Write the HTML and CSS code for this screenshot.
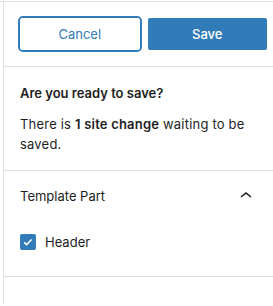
FILE: index.html
```html
<!DOCTYPE html>
<html>
<head>
<meta charset="utf-8">
<link rel="stylesheet" href="styles.css">
</head>
<body>
<div class="frame">
  <div class="panel">
    <div class="actions">
      <button class="btn btn-secondary">Cancel</button>
      <button class="btn btn-primary">Save</button>
    </div>
    <div class="section intro">
      <h2 class="title">Are you ready to save?</h2>
      <p class="desc">There is <strong>1 site change</strong> waiting to be saved.</p>
    </div>
    <div class="section group">
      <div class="group-head">
        <span class="group-title">Template Part</span>
        <svg class="chev" width="24" height="24" viewBox="0 0 24 24"><path d="M6.5 12.4L12 8l5.5 4.4-.9 1.2L12 10l-4.6 3.6-1-1.2z" fill="#1e1e1e"/></svg>
      </div>
      <label class="check-row">
        <span class="checkbox"><svg width="16" height="16" viewBox="0 0 16 16"><path d="M4.2 8.3l2.4 2.3 5-5.1" fill="none" stroke="#fff" stroke-width="1.6"/></svg></span>
        <span class="check-label">Header</span>
      </label>
    </div>
    <div class="rest"></div>
  </div>
</div>
</body>
</html>
```
FILE: styles.css
```css
html, body {
  margin: 0;
  padding: 0;
  background: #fff;
}
body {
  font-family: Inter, "Noto Sans", sans-serif;
  font-size: 13px;
  color: #1e1e1e;
  overflow: hidden;
  width: 273px;
  height: 306px;
}
.frame {
  margin-top: 1px;
  border-top: 1px solid #e0e0e0;
  height: 304px;
}
.panel {
  margin-left: 3px;
  width: 280px;
  border-left: 1px solid #e0e0e0;
  height: 302px;
  box-sizing: border-box;
}
.actions {
  display: flex;
  gap: 8px;
  padding: 16px;
  border-bottom: 1px solid #e0e0e0;
}
.btn {
  flex: 1;
  height: 32px;
  border-radius: 2px;
  font-family: inherit;
  font-size: 13px;
  border: 0;
  padding: 0;
  cursor: pointer;
}
.btn-secondary {
  background: #fff;
  color: #317bb8;
  box-shadow: inset 0 0 0 1px #fff, 0 0 0 2px #317bb8;
  border-radius: 3px;
}
.btn-primary {
  background: #317bb8;
  color: #fff;
  font-weight: 500;
}
.section {
  padding: 16px;
  border-bottom: 1px solid #e0e0e0;
}
.title {
  margin: 0 0 11px;
  font-size: 13px;
  line-height: 20px;
  font-weight: 600;
}
.desc {
  margin: 0;
  line-height: 20px;
  letter-spacing: 0.2px;
}
.desc strong {
  font-weight: 600;
}
.group {
  padding: 13px 16px 26px;
}
.group-head {
  display: flex;
  align-items: center;
  justify-content: space-between;
  height: 24px;
  padding-right: 9px;
}
.group-title {
  line-height: 20px;
}
.check-row {
  display: flex;
  align-items: center;
  gap: 9px;
  margin-top: 26px;
  height: 16px;
}
.checkbox {
  width: 16px;
  height: 16px;
  border-radius: 2px;
  background: #317bb8;
  display: block;
}
.checkbox svg {
  display: block;
}
.check-label {
  line-height: 20px;
}
```
